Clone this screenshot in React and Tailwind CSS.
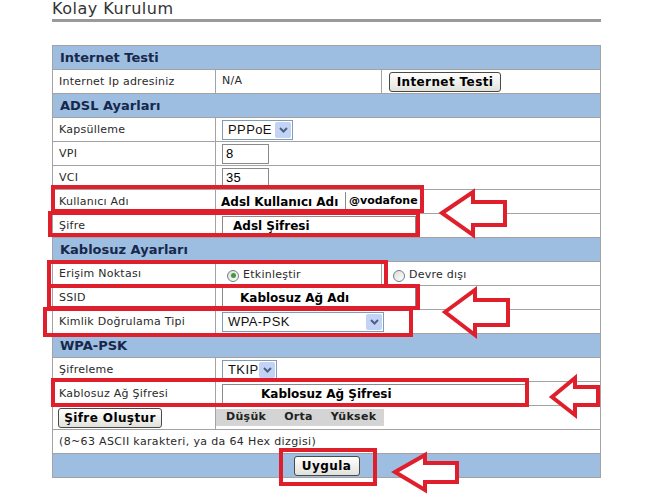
import React from 'react';

const FONT = "font-['DejaVu_Sans',Verdana,sans-serif]";
const ARIAL = "font-['Liberation_Sans',Arial,sans-serif]";

function Chevron() {
  return (
    <svg width="9" height="6" viewBox="0 0 9 6">
      <path d="M1 1 L4.5 4.5 L8 1" fill="none" stroke="#4d6185" strokeWidth="2" />
    </svg>
  );
}

function Select({ value, width }) {
  return (
    <div className={`flex h-[20px] items-center border border-[#7f9db9] bg-white ${width}`}>
      <span className={`flex-1 pl-[5px] text-[13px] leading-none tracking-[0.4px] text-[#111] ${ARIAL}`}>{value}</span>
      <span className="mr-px flex h-[16px] w-[16px] items-center justify-center rounded-[2px] bg-[#c3d3f5]">
        <Chevron />
      </span>
    </div>
  );
}

function Radio({ checked }) {
  return (
    <span className="flex h-[12px] w-[12px] items-center justify-center rounded-full border border-[#6f7f8f] bg-gradient-to-br from-[#dcdcd6] to-white">
      {checked && <span className="h-[5px] w-[5px] rounded-full bg-[#3e9a3e]" />}
    </span>
  );
}

function Button({ children, className = '' }) {
  return (
    <button
      className={`flex items-center justify-center rounded-[3px] border border-[#4a4a4a] bg-gradient-to-b from-white to-[#e2e2dc] text-[12px] font-bold tracking-[0.4px] text-black ${FONT} ${className}`}
    >
      {children}
    </button>
  );
}

function Header({ children }) {
  return (
    <div className={`flex h-[24px] items-center border-t border-[#a3a3a3] bg-[#9dbde1] pl-[7px] text-[13px] font-bold text-[#17284a] ${FONT}`}>
      {children}
    </div>
  );
}

function Row({ label, children, pad = 'pl-[6px]', third }) {
  return (
    <div className={`flex h-[24px] border-t border-[#a3a3a3] text-[11px] tracking-[0.25px] text-[#2a2a2a] ${FONT}`}>
      <div className="flex w-[162px] items-center pl-[6px] pt-px">{label}</div>
      <div className={`flex items-center border-l border-[#a3a3a3] ${pad} ${third ? 'w-[166px]' : 'flex-1'}`}>
        {children}
      </div>
      {third && <div className="flex flex-1 items-center border-l border-[#a3a3a3] pl-[7px]">{third}</div>}
    </div>
  );
}

function TextBox({ children, className = '' }) {
  return (
    <div className={`flex h-[20px] items-center border border-[#8a8a8a] bg-white ${className}`}>{children}</div>
  );
}

const boxes = [
  'left-[51px] top-[185px] w-[373px] h-[28px]',
  'left-[48px] top-[211px] w-[372px] h-[26px]',
  'left-[47px] top-[260px] w-[341px] h-[28px]',
  'left-[47px] top-[284px] w-[373px] h-[26px]',
  'left-[43px] top-[307px] w-[370px] h-[30px]',
  'left-[51px] top-[378px] w-[478px] h-[29px]',
  'left-[279px] top-[448px] w-[98px] h-[38px]',
];

function arrow(tip, tipY, hx, top, bot, st, sb, rx) {
  return `${tip},${tipY} ${hx},${top} ${hx},${st} ${rx},${st} ${rx},${sb} ${hx},${sb} ${hx},${bot}`;
}

const arrows = [
  arrow(442, 213, 473, 192, 235, 202, 225, 505),
  arrow(445, 312, 475, 290, 335, 300, 325, 508),
  arrow(552, 397, 575, 378, 415, 387, 405, 598),
  arrow(395, 472, 425, 455, 490, 463, 482, 457),
];

export default function App() {
  return (
    <div className="relative h-[496px] w-[670px] overflow-hidden bg-white pl-[52px]">
      <div className={`h-[22px] w-[549px] border-b-[3px] border-[#9a9a9a] text-[16px] leading-[17px] tracking-[0.5px] text-[#333] ${FONT}`}>
        Kolay Kurulum
      </div>

      <div className="mt-[23px] w-[549px] border-x border-b border-[#a3a3a3]">
        <Header>Internet Testi</Header>
        <Row label="Internet Ip adresiniz" third={<Button className="h-[20px] w-[112px]">Internet Testi</Button>}>
          N/A
        </Row>

        <Header>ADSL Ayarları</Header>
        <Row label="Kapsülleme">
          <Select value="PPPoE" width="w-[71px]" />
        </Row>
        <Row label="VPI">
          <TextBox className={`w-[47px] pl-[3px] text-[13px] text-black ${ARIAL}`}>8</TextBox>
        </Row>
        <Row label="VCI">
          <TextBox className={`w-[47px] pl-[3px] text-[13px] text-black ${ARIAL}`}>35</TextBox>
        </Row>
        <Row label="Kullanıcı Adı" pad="pl-[2px]">
          <TextBox className="w-[128px] border-y-0 border-l-0 pl-[3px] text-[12px] font-bold tracking-normal text-black">Adsl Kullanıcı Adı</TextBox>
          <span className="ml-[3px] text-[11px] font-bold tracking-normal text-black">@vodafone</span>
        </Row>
        <Row label="Şifre">
          <TextBox className="w-[194px] pl-[10px] text-[12px] font-bold tracking-normal text-black">Adsl Şifresi</TextBox>
        </Row>

        <Header>Kablosuz Ayarları</Header>
        <Row
          label="Erişim Noktası"
          pad="pl-[11px]"
          third={
            <span className="flex items-center gap-[4px] pl-[4px] pt-[4px]">
              <Radio /> Devre dışı
            </span>
          }
        >
          <span className="flex items-center gap-[4px] pt-[4px]">
            <Radio checked /> Etkinleştir
          </span>
        </Row>
        <Row label="SSID">
          <TextBox className="w-[194px] border-y-0 pl-[17px] text-[12px] font-bold tracking-normal text-black">Kablosuz Ağ Adı</TextBox>
        </Row>
        <Row label="Kimlik Doğrulama Tipi">
          <Select value="WPA-PSK" width="w-[162px]" />
        </Row>

        <Header>WPA-PSK</Header>
        <Row label="Şifreleme">
          <Select value="TKIP" width="w-[55px]" />
        </Row>
        <Row label="Kablosuz Ağ Şifresi">
          <TextBox className="w-[304px] pl-[38px] text-[12px] font-bold tracking-normal text-black">Kablosuz Ağ Şifresi</TextBox>
        </Row>
        <Row label={<Button className="-ml-px h-[20px] w-[104px]">Şifre Oluştur</Button>} pad="pl-0">
          <div className="flex h-[17px] w-[168px] items-center gap-[18px] bg-[#d4d4d4] pl-[10px] text-[11px] font-bold tracking-[0.3px] text-[#222]">
            <span>Düşük</span>
            <span>Orta</span>
            <span>Yüksek</span>
          </div>
        </Row>
        <div className={`flex h-[24px] items-center border-t border-[#a3a3a3] pl-[6px] pt-px text-[11px] tracking-[0.35px] text-[#2a2a2a] ${FONT}`}>
          (8~63 ASCII karakteri, ya da 64 Hex dizgisi)
        </div>
        <div className="flex h-[24px] items-center justify-center border-t border-[#a3a3a3] bg-[#9dbde1]">
          <Button className="h-[20px] w-[66px]">Uygula</Button>
        </div>
      </div>

      {boxes.map((b) => (
        <div key={b} className={`pointer-events-none absolute border-[4px] border-[#df1f2b] ${b}`} />
      ))}

      <svg className="pointer-events-none absolute left-0 top-0" width="670" height="496">
        {arrows.map((p) => (
          <polygon key={p} points={p} fill="white" stroke="#df1f2b" strokeWidth="4" strokeLinejoin="miter" />
        ))}
      </svg>
    </div>
  );
}
